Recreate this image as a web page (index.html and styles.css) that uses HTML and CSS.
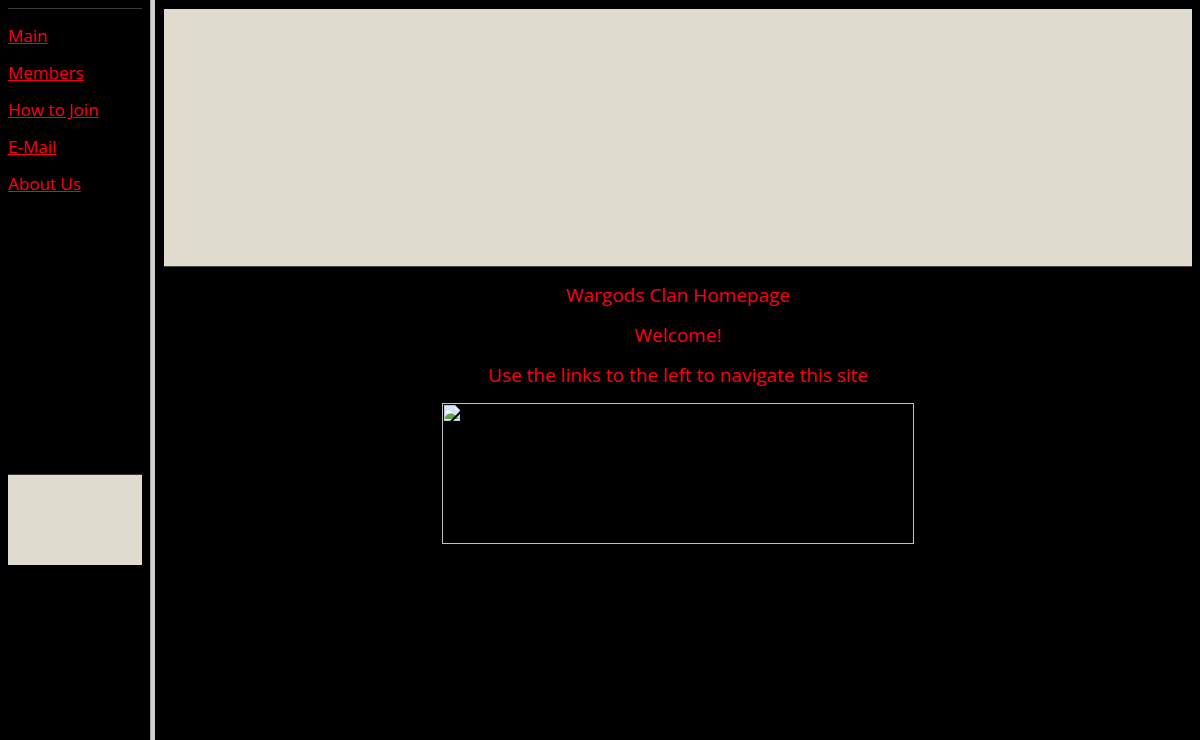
FILE: index.html
```html
<!DOCTYPE html>
<html lang="en">
<head>
    <meta charset="UTF-8">
    <meta name="viewport" content="width=device-width, initial-scale=1.0">
    <title>Wargods Clan Homepage</title>
    <link rel="stylesheet" href="styles.css">
</head>
<body>

    <nav class="sidebar">
        <hr class="rule">
        <ul class="links">
            <li><a href="#main">Main</a></li>
            <li><a href="#members">Members</a></li>
            <li><a href="#join">How to Join</a></li>
            <li><a href="#email">E-Mail</a></li>
            <li><a href="#about">About Us</a></li>
        </ul>
        <div class="side-banner"></div>
    </nav>
    <div class="divider"></div>

    <main class="content" id="main">
        <div class="banner"></div>
        <p>Wargods Clan Homepage</p>
        <p>Welcome!</p>
        <p>Use the links to the left to navigate this site</p>
        <div class="picture">
            <svg width="16" height="16" viewBox="0 0 16 16" aria-hidden="true">
                <path d="M0 0h11l5 5v11H0z" fill="#c4c9d2"/>
                <path d="M1 1h10v4h4v10H1z" fill="#d5e3fb"/>
                <path d="M11 1l4 4h-4z" fill="#f7f9fc"/>
                <path d="M3 6c0-2 3-2 3 0 2 0 2 2 0 2H3C1 8 1 6 3 6z" fill="#fff"/>
                <path d="M1 14v-2c3-4 7-5 11-1l3 3z" fill="#58a843"/>
                <path d="M1 14h14v1H1z" fill="#eef2f8"/>
                <path d="M6 16L16 6v3L9 16z" fill="#000"/>
            </svg>
        </div>
    </main>

</body>
</html>
```

FILE: styles.css
```css
body {
    margin: 0;
    min-height: 100vh;
    display: flex;
    background-color: #000;
    color: #fa0010;
    font-family: "Open Sans", "Noto Sans", sans-serif;
    line-height: 20px;
}
.sidebar {
    width: 134px;
    padding: 8px;
    font-size: 17px;
}
.divider {
    width: 4px;
    border-left: 1px solid #a8a8a8;
    background-color: #d0d0d0;
}
.rule {
    height: 1px;
    margin: 0 0 17px;
    border: none;
    background-color: #3a3a3a;
}
.links {
    margin: 0;
    padding: 0;
    list-style: none;
}
.links li {
    margin-bottom: 17px;
}
.links a {
    color: inherit;
}
.side-banner {
    height: 90px;
    margin-top: 280px;
    border-top: 1px solid #3a3833;
    background-color: #dfdbcf;
}
.content {
    flex: 1;
    padding: 9px 8px 8px 9px;
    font-size: 19px;
    text-align: center;
}
.content p {
    margin: 20px 0 0;
}
.banner {
    height: 257px;
    margin-bottom: 18px;
    border-bottom: 1px solid #4a4a43;
    background-color: #dfdbcf;
}
.content .banner + p {
    margin-top: 18px;
}
.picture {
    box-sizing: border-box;
    max-width: 472px;
    height: 141px;
    margin: 18px auto 0;
    padding: 1px;
    border: 1px solid #c0c0c0;
    text-align: left;
}
.picture svg {
    display: block;
}
```
